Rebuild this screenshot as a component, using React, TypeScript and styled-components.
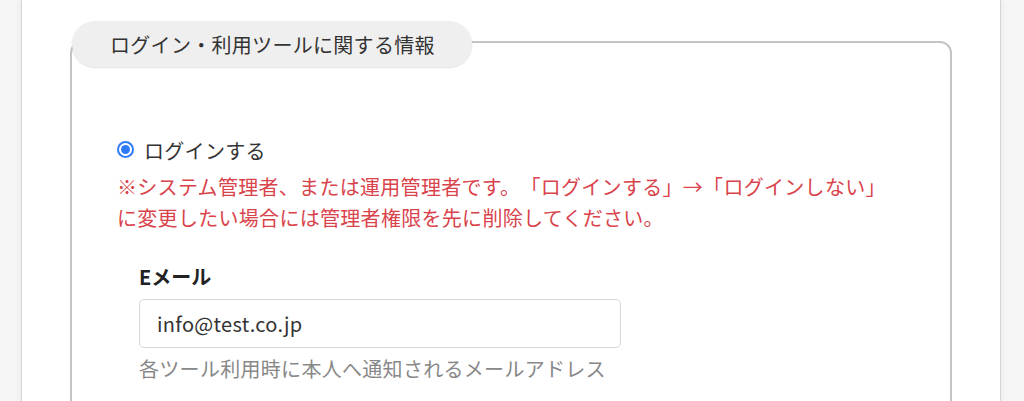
import React from "react";
import styled, { createGlobalStyle } from "styled-components";

const GlobalStyle = createGlobalStyle`
  html, body {
    margin: 0;
    padding: 0;
    background: #f6f6f6;
  }
  body {
    font-family: "Noto Sans CJK JP", "Noto Sans", "Liberation Sans", sans-serif;
    color: #333;
    text-spacing-trim: space-all;
  }
  * { box-sizing: border-box; }
`;

const Card = styled.main`
  margin-left: 21px;
  width: 980px;
  height: 401px;
  overflow: hidden;
  background: #fff;
  border-left: 1px solid #d6d6d6;
  border-right: 1px solid #d6d6d6;
  box-shadow: 0 0 8px rgba(0, 0, 0, 0.07);
  padding: 41px 48px 0 48px;
`;

const Fieldset = styled.section`
  position: relative;
  border: 2px solid #c4c4c4;
  border-radius: 12px;
  padding: 92px 40px 30px 45px;
  min-height: 400px;
`;

const Legend = styled.h2`
  position: absolute;
  top: -22px;
  left: 0;
  margin: 0;
  height: 46px;
  display: flex;
  align-items: center;
  padding: 0 37px 0 38px;
  background: #efefef;
  border-radius: 23px;
  box-shadow: 0 1px 2px rgba(0, 0, 0, 0.12);
  font-size: 20px;
  font-weight: 400;
  color: #333;
  letter-spacing: 0.3px;
  white-space: nowrap;
`;

const RadioLabel = styled.label`
  display: flex;
  align-items: center;
  gap: 10px;
  height: 31px;
  font-size: 20px;
  line-height: 31px;
  color: #333;
  letter-spacing: 0.3px;
`;

const Radio = styled.input`
  appearance: none;
  margin: 0 0 3px 0;
  width: 17px;
  height: 17px;
  border-radius: 50%;
  border: 2px solid #2f7cf6;
  background: #fff;
  display: grid;
  place-items: center;
  &::after {
    content: "";
    width: 9px;
    height: 9px;
    border-radius: 50%;
    background: #2f7cf6;
  }
`;

const Notice = styled.p`
  margin: 5px 0 0 0;
  font-size: 20px;
  line-height: 31px;
  color: #d9434b;
  letter-spacing: 0.3px;
`;

const FieldGroup = styled.div`
  margin: 28px 0 0 22px;
  display: flex;
  flex-direction: column;
`;

const FieldLabel = styled.label`
  font-size: 20px;
  font-weight: 700;
  line-height: 31px;
  color: #222;
`;

const TextInput = styled.input`
  margin-top: 7px;
  width: 482px;
  height: 49px;
  border: 1.5px solid #d3d7dc;
  border-radius: 5px;
  padding: 0 17px;
  font-family: "Noto Sans CJK JP", "Noto Sans", sans-serif;
  font-size: 20px;
  color: #333;
  letter-spacing: 0.3px;
  outline: none;
`;

const Help = styled.p`
  margin: 5px 0 0 0;
  font-size: 20px;
  line-height: 31px;
  color: #888;
  letter-spacing: 0.3px;
`;

export default function App() {
  return (
    <>
      <GlobalStyle />
      <Card>
        <Fieldset>
          <Legend>ログイン・利用ツールに関する情報</Legend>
          <RadioLabel>
            <Radio type="radio" name="login" defaultChecked />
            ログインする
          </RadioLabel>
          <Notice>
            ※システム管理者、または運用管理者です。「ログインする」→「ログインしない」
            <br />
            に変更したい場合には管理者権限を先に削除してください。
          </Notice>
          <FieldGroup>
            <FieldLabel htmlFor="email">Eメール</FieldLabel>
            <TextInput id="email" type="text" defaultValue="info@test.co.jp" />
            <Help>各ツール利用時に本人へ通知されるメールアドレス</Help>
          </FieldGroup>
        </Fieldset>
      </Card>
    </>
  );
}
